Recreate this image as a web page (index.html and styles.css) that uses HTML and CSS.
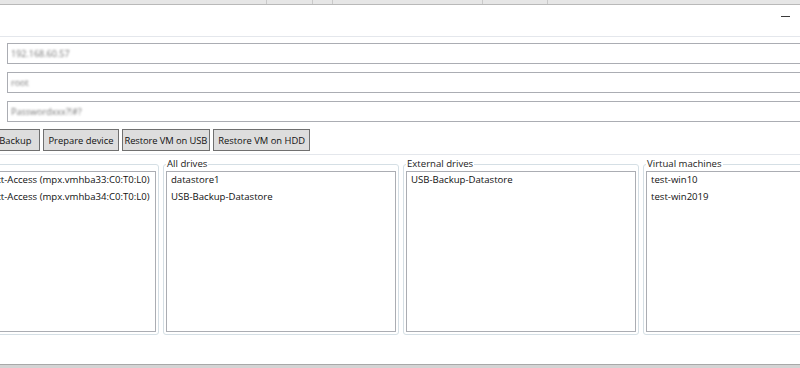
FILE: index.html
```html
<!DOCTYPE html>
<html lang="en">
<head>
<meta charset="utf-8">
<title>ESXi USB Backup</title>
<link rel="stylesheet" href="styles.css">
</head>
<body>
<div class="bgstrip">
  <span class="col c1"></span><span class="col c2"></span><span class="col c3"></span><span class="col c4"></span><span class="col c5"></span>
</div>
<div class="window">
  <div class="titlebar"><span class="minimize" title="Minimize"></span></div>
  <div class="form">
    <div class="textbox"><span class="blurred">192.168.60.57</span></div>
    <div class="textbox"><span class="blurred">root</span></div>
    <div class="textbox"><span class="blurred">Passwordxxx?!#?</span></div>
    <div class="buttons">
      <button class="btn btn-first">Start Backup</button>
      <button class="btn">Prepare device</button>
      <button class="btn btn-tight">Restore VM on USB</button>
      <button class="btn">Restore VM on HDD</button>
    </div>
  </div>
  <div class="separator"></div>
  <div class="groups">
    <fieldset class="group">
      <legend>Devices</legend>
      <div class="listbox">
        <div class="item">Local USB Direct-Access (mpx.vmhba33:C0:T0:L0)</div>
        <div class="item">Local USB Direct-Access (mpx.vmhba34:C0:T0:L0)</div>
      </div>
    </fieldset>
    <fieldset class="group">
      <legend>All drives</legend>
      <div class="listbox">
        <div class="item">datastore1</div>
        <div class="item">USB-Backup-Datastore</div>
      </div>
    </fieldset>
    <fieldset class="group">
      <legend>External drives</legend>
      <div class="listbox">
        <div class="item">USB-Backup-Datastore</div>
      </div>
    </fieldset>
    <fieldset class="group">
      <legend>Virtual machines</legend>
      <div class="listbox">
        <div class="item">test-win10</div>
        <div class="item">test-win2019</div>
      </div>
    </fieldset>
  </div>
</div>
<div class="bottomedge"></div>
</body>
</html>
```
FILE: styles.css
```css
* { box-sizing: border-box; }
html, body {
  margin: 0;
  padding: 0;
}
body {
  width: 800px;
  height: 368px;
  overflow: hidden;
  background: #ffffff;
  font-family: "Open Sans", "Noto Sans", sans-serif;
  font-size: 9.6px;
  color: #111111;
}
.bgstrip {
  height: 5px;
  background: #e6e6e6;
  border-bottom: 1px solid #b9b9b9;
  display: flex;
}
.col {
  height: 4px;
  border-right: 1px solid #c9c9c9;
}
.c1 { width: 267px; }
.c2 { width: 46px; }
.c3 { width: 20px; }
.c4 { width: 150px; }
.c5 { width: 65px; }
.window {
  height: 359px;
  display: flex;
  flex-direction: column;
}
.titlebar {
  height: 32px;
  border-bottom: 1px solid #e4e7ec;
  display: flex;
  justify-content: flex-end;
  padding-top: 11px;
  padding-right: 10px;
}
.minimize {
  width: 9px;
  height: 1px;
  background: #3a3a3a;
}
.form {
  padding-left: 7px;
  padding-top: 6px;
}
.textbox {
  width: 900px;
  height: 21px;
  border: 1px solid #abadb3;
  margin-bottom: 8px;
  padding-left: 3px;
  display: flex;
  align-items: center;
}
.blurred {
  color: #777;
  filter: blur(1.2px);
  font-size: 9px;
}
.buttons {
  display: flex;
  gap: 3px;
  margin-left: -7px;
  margin-top: -1px;
}
.btn {
  height: 22px;
  background: #dddddd;
  border: 1px solid #707070;
  padding: 0 4px;
  font: inherit;
  font-size: 9.4px;
  color: #111111;
  border-radius: 0;
}
.btn-first {
  margin-left: -29px;
  padding-right: 8px;
}
.btn-tight {
  padding: 0 2px;
  letter-spacing: -0.1px;
}
.separator {
  height: 1px;
  background: #e4e7ec;
  margin-top: 3px;
}
.groups {
  display: flex;
  gap: 4px;
  margin-left: -77px;
  margin-top: 2px;
}
.group {
  flex: 0 0 236px;
  min-width: 0;
  margin: 0;
  border: 1px solid #d5dfe5;
  border-radius: 3px;
  padding: 0 2px 2px 2px;
}
.group legend {
  padding: 0 1px;
  line-height: 14px;
  color: #222;
}
.listbox {
  height: 161px;
  border: 1px solid #abadb3;
  background: #fff;
  overflow: hidden;
}
.item {
  height: 17px;
  line-height: 16px;
  padding-left: 4px;
  white-space: nowrap;
  overflow: hidden;
}
.bottomedge {
  height: 4px;
  border-top: 1px solid #a8a8a8;
  background: #d4d4d4;
}
```
